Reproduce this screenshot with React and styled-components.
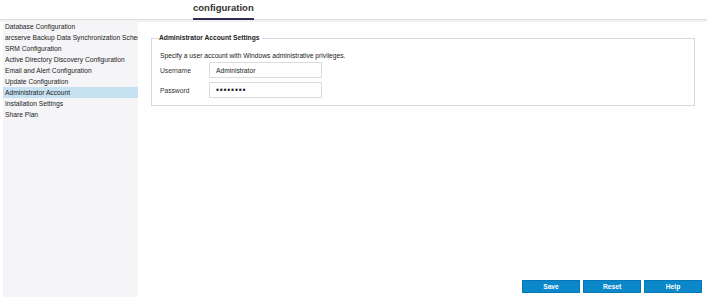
import React from "react";
import styled, { createGlobalStyle } from "styled-components";

const GlobalStyle = createGlobalStyle`
  html, body {
    margin: 0;
    padding: 0;
    background: #ffffff;
    font-family: "Liberation Sans", Arial, sans-serif;
    color: #222222;
  }
`;

const Page = styled.div`
  width: 707px;
  height: 297px;
  display: flex;
  flex-direction: column;
  overflow: hidden;
`;

const Header = styled.div`
  height: 19px;
  padding-left: 193px;
  border-bottom: 1px solid #dedede;
  box-shadow: 0 2px 0 #f1f1f1;
  display: flex;
  align-items: flex-start;
`;

const Tab = styled.div`
  font-size: 9.5px;
  font-weight: bold;
  color: #333333;
  line-height: 12px;
  padding-top: 2px;
  height: 16px;
  border-bottom: 2px solid #2e2e52;
`;

const Main = styled.div`
  flex: 1;
  display: flex;
  margin-top: 1px;
  min-height: 0;
`;

const Sidebar = styled.ul`
  list-style: none;
  margin: 0 0 0 3px;
  padding: 0;
  width: 135px;
  background: #f5f5f7;
  overflow: hidden;
`;

const NavItem = styled.li`
  height: 11px;
  line-height: 11px;
  font-size: 6.7px;
  padding-left: 2px;
  white-space: nowrap;
  overflow: hidden;
  color: #222222;
  background: ${({ $active }) => ($active ? "#c6e1f2" : "transparent")};
`;

const Content = styled.div`
  flex: 1;
  display: flex;
  flex-direction: column;
`;

const Fieldset = styled.fieldset`
  margin: 13px 12px 0 13px;
  padding: 9px 8px 7px 8px;
  border: 1px solid #d9d8e2;
  min-width: 0;
`;

const Legend = styled.legend`
  font-size: 6.7px;
  font-weight: bold;
  line-height: 8px;
  padding: 0 3px 0 0;
  margin-left: -1px;
  color: #222222;
`;

const Hint = styled.div`
  font-size: 6.7px;
  line-height: 9px;
  margin-bottom: 2px;
`;

const FormGrid = styled.div`
  display: grid;
  grid-template-columns: 49px 113px;
  row-gap: 4px;
  align-items: center;
`;

const Label = styled.label`
  font-size: 6.7px;
  color: #333333;
`;

const Input = styled.input`
  box-sizing: border-box;
  width: 113px;
  height: 16px;
  margin: 0;
  padding: 0 6px;
  border: 1px solid #dcdcdc;
  font-family: "Liberation Sans", Arial, sans-serif;
  font-size: ${({ type }) => (type === "password" ? "8.5px" : "6.7px")};
  color: #222222;
  outline: none;
  letter-spacing: ${({ type }) => (type === "password" ? "0.8px" : "0")};
`;

const Footer = styled.div`
  margin-top: auto;
  display: flex;
  justify-content: flex-end;
  gap: 3px;
  padding: 0 5px 4px 0;
`;

const Button = styled.button`
  width: 58px;
  height: 13px;
  padding: 0;
  border: 1px solid #0877b5;
  background: #0a88ca;
  color: #ffffff;
  font-family: "Liberation Sans", Arial, sans-serif;
  font-size: 6.7px;
  font-weight: bold;
  line-height: 11px;
`;

const navItems = [
  "Database Configuration",
  "arcserve Backup Data Synchronization Schedule",
  "SRM Configuration",
  "Active Directory Discovery Configuration",
  "Email and Alert Configuration",
  "Update Configuration",
  "Administrator Account",
  "Installation Settings",
  "Share Plan",
];

const App = () => {
  return (
    <Page>
      <GlobalStyle />
      <Header>
        <Tab>configuration</Tab>
      </Header>
      <Main>
        <Sidebar>
          {navItems.map((item) => (
            <NavItem key={item} $active={item === "Administrator Account"}>
              {item}
            </NavItem>
          ))}
        </Sidebar>
        <Content>
          <Fieldset>
            <Legend>Administrator Account Settings</Legend>
            <Hint>Specify a user account with Windows administrative privileges.</Hint>
            <FormGrid>
              <Label>Username</Label>
              <Input type="text" defaultValue="Administrator" />
              <Label>Password</Label>
              <Input type="password" defaultValue="password" />
            </FormGrid>
          </Fieldset>
          <Footer>
            <Button>Save</Button>
            <Button>Reset</Button>
            <Button>Help</Button>
          </Footer>
        </Content>
      </Main>
    </Page>
  );
};

export default App;
